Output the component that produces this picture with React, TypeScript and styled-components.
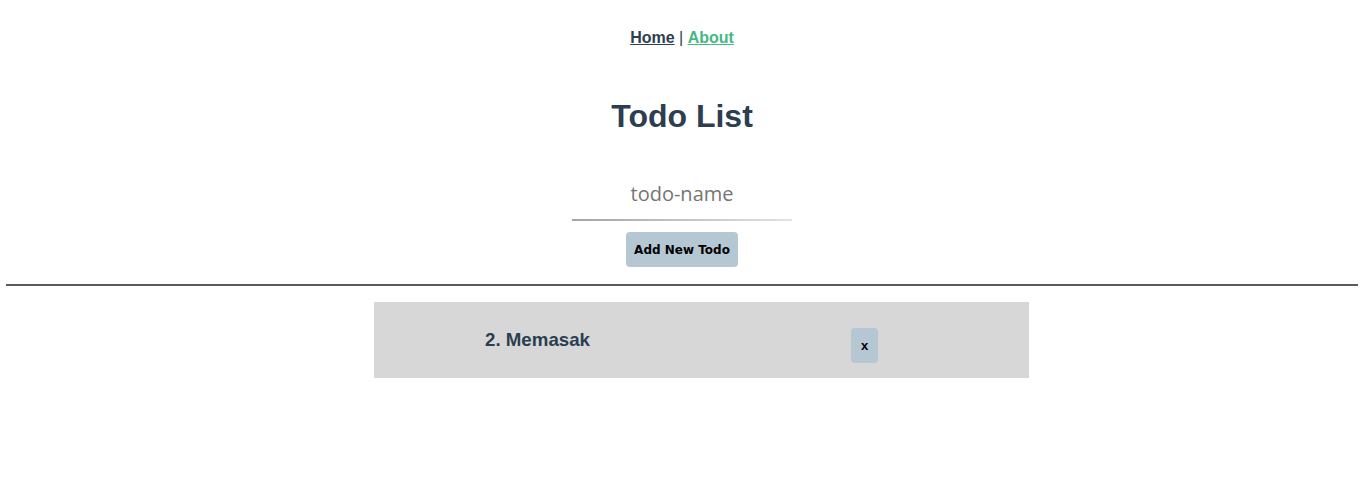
import { createGlobalStyle, styled } from 'styled-components'

const GlobalStyle = createGlobalStyle`
  body {
    margin: 0;
    background: #fff;
  }
`

const Page = styled.div`
  font-family: 'Liberation Sans', Arial, sans-serif;
  color: #2c3e50;
  text-align: center;
  padding: 0 8px;
`

const Nav = styled.nav`
  padding: 29px 0 30px;
  font-size: 16px;
  line-height: 18px;
`

const NavLink = styled.a<{ $active?: boolean }>`
  font-weight: bold;
  color: ${p => (p.$active ? '#42b983' : '#2c3e50')};
  text-decoration: underline;
`

const Title = styled.h1`
  margin: 21px 0 38px;
  font-size: 32px;
  line-height: 37px;
`

const Form = styled.div`
  display: flex;
  flex-direction: column;
  align-items: center;
  gap: 11px;
`

const NameInput = styled.input`
  box-sizing: border-box;
  width: 220px;
  height: 48px;
  border: none;
  padding: 0 0 8px;
  outline: none;
  text-align: center;
  font-family: 'Open Sans', 'DejaVu Sans', sans-serif;
  font-size: 20px;
  color: #333;
  background: linear-gradient(to right, #a3a3a3, #e3e3e3) bottom / 100% 2px no-repeat;
  &::placeholder {
    color: #757575;
  }
`

const Button = styled.button`
  border: none;
  border-radius: 4px;
  background: #b5c7d3;
  color: #000;
  font-family: 'DejaVu Sans', Verdana, sans-serif;
  font-weight: bold;
  font-size: 12px;
`

const AddButton = styled(Button)`
  width: 112px;
  height: 35px;
`

const Divider = styled.hr`
  margin: 17px -2px 16px -2px;
  border: none;
  border-top: 2px solid #5a5a5a;
`

const List = styled.div`
  display: flex;
  flex-direction: column;
  align-items: center;
  padding-left: 39px;
`

const Item = styled.div`
  width: 655px;
  height: 76px;
  background: #d7d7d7;
  display: grid;
  grid-template-columns: 111px 1fr 27px 151px;
  align-items: center;
  text-align: left;
`

const ItemName = styled.span`
  grid-column: 2;
  font-size: 18.72px;
  font-weight: bold;
  color: #2c3e50;
`

const RemoveButton = styled(Button)`
  grid-column: 3;
  width: 27px;
  height: 35px;
  padding: 0;
  margin-top: 10px;
  font-family: 'Liberation Sans', Arial, sans-serif;
  font-size: 13px;
`

export default function App() {
  return (
    <Page>
      <GlobalStyle />
      <Nav>
        <NavLink href="#">Home</NavLink> | <NavLink href="#" $active>About</NavLink>
      </Nav>
      <Title>Todo List</Title>
      <Form>
        <NameInput placeholder="todo-name" />
        <AddButton>Add New Todo</AddButton>
      </Form>
      <Divider />
      <List>
        <Item>
          <ItemName>2. Memasak</ItemName>
          <RemoveButton>x</RemoveButton>
        </Item>
      </List>
    </Page>
  )
}
